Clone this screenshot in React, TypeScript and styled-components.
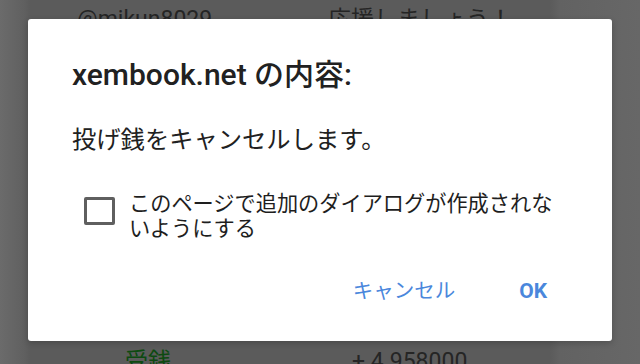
import styled, { createGlobalStyle } from "styled-components";

const GlobalStyle = createGlobalStyle`
  html, body {
    margin: 0;
    padding: 0;
    background: #5c5c5c;
  }
  body {
    font-family: Roboto, "Noto Sans CJK JP", sans-serif;
  }
`;

const FONT = `Roboto, "Noto Sans CJK JP", "Noto Sans", sans-serif`;

const Screen = styled.div`
  position: relative;
  width: 640px;
  height: 364px;
  overflow: hidden;
  background: linear-gradient(
    to right,
    #6b6b6b 0,
    #606060 24px,
    #5b5b5b 30px,
    #5b5b5b 550px,
    #626262 560px,
    #676767 640px
  );
`;

const BackPage = styled.div`
  display: flex;
  flex-direction: column;
  justify-content: space-between;
  height: 100%;
  font-family: ${FONT};
  font-size: 23px;
  color: #262626;
`;

const BackRow = styled.div<{ $top?: boolean }>`
  display: grid;
  grid-template-columns: ${(p) => (p.$top ? "77px 251px 1fr" : "125px 227px 1fr")};
  margin-top: ${(p) => (p.$top ? "5px" : "0")};
  margin-bottom: ${(p) => (p.$top ? "0" : "-13px")};
  line-height: 30px;
`;

const BackCell = styled.span<{ $green?: boolean }>`
  color: ${(p) => (p.$green ? "#0d4a10" : "#252525")};
  white-space: nowrap;
`;

const Overlay = styled.div`
  position: absolute;
  left: 28px;
  top: 19px;
  width: 584px;
  height: 322px;
  box-sizing: border-box;
  background: #ffffff;
  border-radius: 3px;
  box-shadow: 0 2px 6px rgba(0, 0, 0, 0.2);
  padding: 38px 44px 0 44px;
  display: flex;
  flex-direction: column;
  font-family: ${FONT};
`;

const Title = styled.div`
  font-size: 30px;
  font-weight: 500;
  line-height: 36px;
  color: #212121;
`;

const Message = styled.div`
  margin-top: 32px;
  font-size: 24.3px;
  line-height: 30px;
  color: #212121;
`;

const CheckRow = styled.label`
  display: flex;
  align-items: flex-start;
  gap: 14px;
  margin-top: 36px;
  padding-left: 12px;
`;

const Box = styled.span`
  flex: none;
  width: 31px;
  height: 28px;
  margin-top: 6px;
  box-sizing: border-box;
  border: 3px solid #5f5f5f;
  border-radius: 2px;
`;

const CheckText = styled.span`
  font-size: 21.2px;
  line-height: 25px;
  color: #1e1e1e;
  width: 440px;
`;

const Actions = styled.div`
  display: flex;
  justify-content: flex-end;
  align-items: center;
  gap: 64px;
  margin-top: 38px;
  padding-right: 21px;
`;

const ActionButton = styled.span<{ $bold?: boolean }>`
  font-size: ${(p) => (p.$bold ? "21px" : "20.5px")};
  font-weight: ${(p) => (p.$bold ? 700 : 400)};
  line-height: 24px;
  color: #4a87dc;
`;

export default function App() {
  return (
    <>
      <GlobalStyle />
      <Screen>
        <BackPage>
          <BackRow $top>
            <span />
            <BackCell>@mikun8029</BackCell>
            <BackCell>応援しましょう！</BackCell>
          </BackRow>
          <BackRow>
            <span />
            <BackCell $green>受銭</BackCell>
            <BackCell>+ 4.958000</BackCell>
          </BackRow>
        </BackPage>
        <Overlay>
          <Title>xembook.net の内容:</Title>
          <Message>投げ銭をキャンセルします。</Message>
          <CheckRow>
            <Box />
            <CheckText>このページで追加のダイアログが作成されないようにする</CheckText>
          </CheckRow>
          <Actions>
            <ActionButton>キャンセル</ActionButton>
            <ActionButton $bold>OK</ActionButton>
          </Actions>
        </Overlay>
      </Screen>
    </>
  );
}
